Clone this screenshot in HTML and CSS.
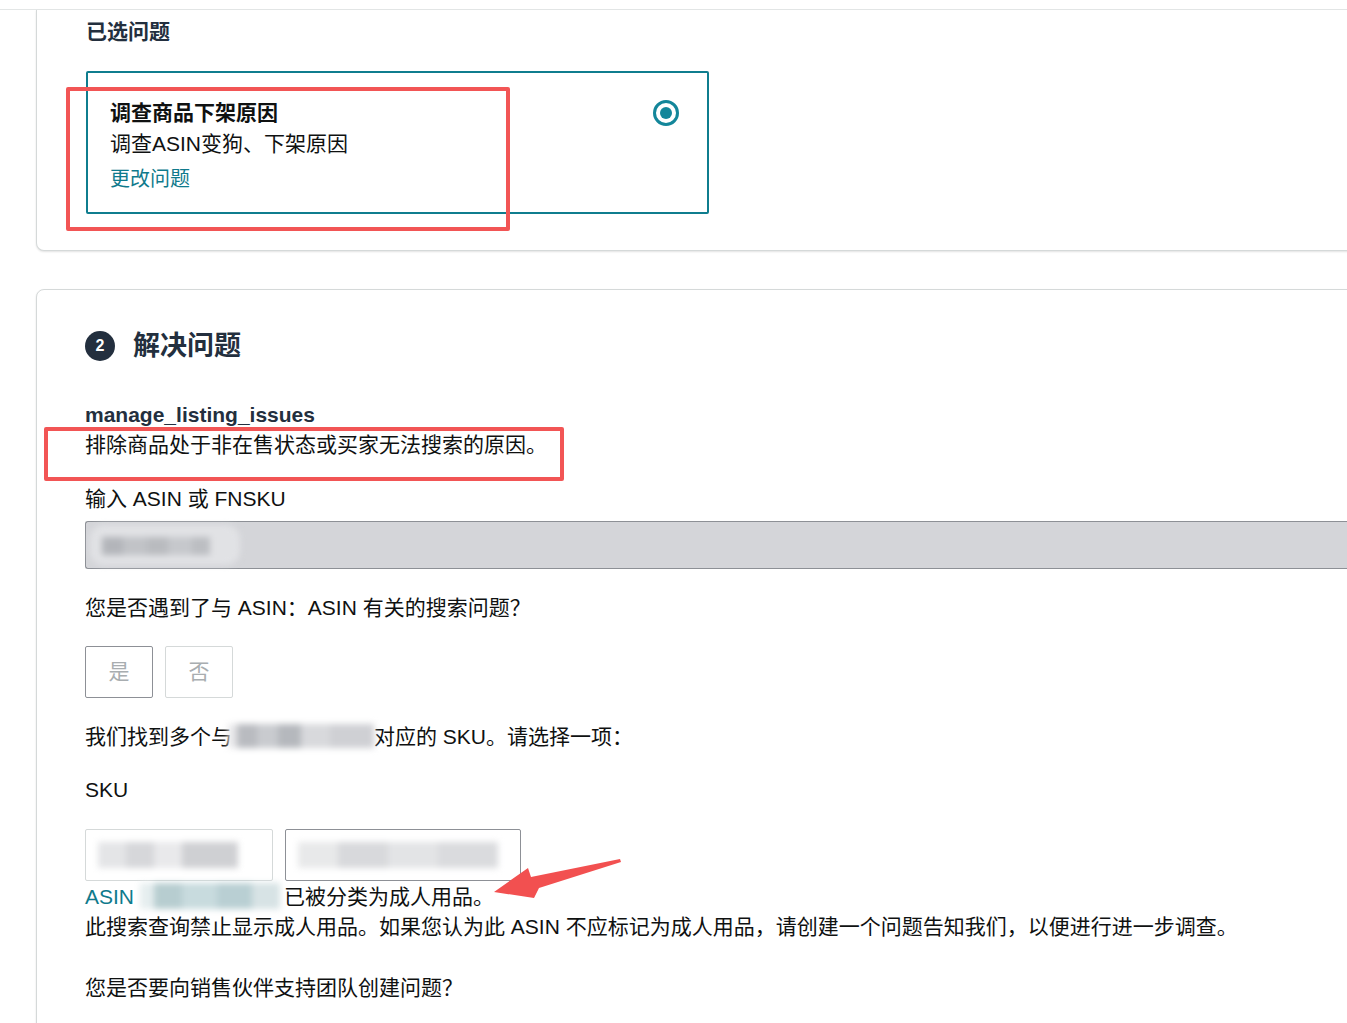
FILE: index.html
```html
<!DOCTYPE html>
<html lang="zh-CN">
<head>
<meta charset="utf-8">
<title>解决问题</title>
<link rel="stylesheet" href="styles.css">
</head>
<body>
<div class="topline"></div>
<div class="card card-top">
  <h3 class="section-title">已选问题</h3>
  <div class="selected-box">
    <div class="sel-text">
      <div class="sel-title">调查商品下架原因</div>
      <div class="sel-desc">调查ASIN变狗、下架原因</div>
      <a class="link sel-link">更改问题</a>
    </div>
    <span class="radio"><span class="radio-dot"></span></span>
  </div>
  <div class="annot annot-1"></div>
</div>

<div class="card card-main">
  <div class="step-head">
    <span class="step-num">2</span>
    <h2 class="step-title">解决问题</h2>
  </div>
  <div class="intro">
    <div class="intro-key">manage_listing_issues</div>
    <div class="line">排除商品处于非在售状态或买家无法搜索的原因。</div>
    <div class="annot annot-2"></div>
  </div>

  <div class="line label">输入 ASIN 或 FNSKU</div>
  <div class="input"><span class="blur blur-input"></span></div>

  <div class="line q1">您是否遇到了与 ASIN：ASIN 有关的搜索问题？</div>
  <div class="btn-row">
    <span class="choice choice-yes">是</span>
    <span class="choice">否</span>
  </div>

  <div class="line q2">我们找到多个与<span class="blur blur-inline"></span>对应的 SKU。请选择一项：</div>
  <div class="line sku-label">SKU</div>
  <div class="sku-row">
    <span class="sku-box"><span class="blur blur-sku1"></span></span>
    <span class="sku-box sku-box-dark"><span class="blur blur-sku2"></span></span>
  </div>
  <div class="adult">
    <div class="line"><span class="teal">ASIN</span><span class="blur blur-asin"></span>已被分类为成人用品。</div>
    <div class="line">此搜索查询禁止显示成人用品。如果您认为此 ASIN 不应标记为成人用品，请创建一个问题告知我们，以便进行进一步调查。</div>
    <svg class="arrow" width="140" height="50" viewBox="0 0 140 50">
      <path d="M1 40 L35 16 L38 25 L127 7 L128 10 L46 36 L41 46 Z" fill="#f25050"/>
    </svg>
  </div>
  <div class="line q3">您是否要向销售伙伴支持团队创建问题？</div>
</div>
</body>
</html>
```

FILE: styles.css
```css
html, body {
  margin: 0;
  padding: 0;
  background: #ffffff;
  overflow: hidden;
}
body {
  font-family: "Liberation Sans", "Noto Sans CJK SC", sans-serif;
  color: #0f1111;
  font-size: 21px;
  line-height: 30px;
  width: 1347px;
  height: 1023px;
}
.topline {
  height: 9px;
  border-bottom: 1px solid #e3e6e6;
}
.card {
  position: relative;
  margin-left: 36px;
  width: 1400px;
  background: #fff;
  border: 1px solid #d5d9d9;
  box-sizing: border-box;
  box-shadow: 0 1px 2px rgba(15, 17, 17, 0.12);
}
.card-top {
  border-top: none;
  border-radius: 0 0 0 8px;
  height: 241px;
  padding: 7px 0 0 49px;
}
.section-title {
  margin: 0;
  font-size: 21px;
  line-height: 30px;
  font-weight: bold;
  color: #232f3e;
}
.selected-box {
  margin-top: 24px;
  width: 623px;
  height: 143px;
  box-sizing: border-box;
  border: 2px solid #0f7d8e;
  border-radius: 2px;
  display: flex;
  justify-content: space-between;
  padding: 25px 28px 0 22px;
}
.sel-title {
  font-weight: bold;
  line-height: 30px;
  color: #0f1111;
}
.sel-desc {
  margin-top: 1px;
  line-height: 30px;
}
.sel-link {
  display: block;
  margin-top: 5px;
  font-size: 20px;
  line-height: 30px;
}
.link, .teal {
  color: #0f7a8c;
}
.radio {
  margin-top: 2px;
  width: 26px;
  height: 26px;
  box-sizing: border-box;
  border: 3px solid #13869a;
  border-radius: 50%;
  display: flex;
  align-items: center;
  justify-content: center;
}
.radio-dot {
  width: 12px;
  height: 12px;
  border-radius: 50%;
  background: #13869a;
}
.annot {
  position: absolute;
  border: 4px solid #f25555;
  border-radius: 2px;
  pointer-events: none;
}
.annot-1 {
  left: 29px;
  top: 77px;
  width: 436px;
  height: 136px;
}
.card-main {
  margin-top: 38px;
  border-radius: 8px 0 0 0;
  height: 800px;
  padding: 40px 0 0 48px;
}
.step-head {
  display: flex;
  align-items: center;
  gap: 18px;
  height: 32px;
}
.step-num {
  width: 30px;
  height: 30px;
  border-radius: 50%;
  background: #232f3e;
  color: #fff;
  font-size: 16px;
  font-weight: bold;
  line-height: 30px;
  text-align: center;
}
.step-title {
  margin: 0;
  font-size: 27px;
  line-height: 32px;
  font-weight: bold;
  color: #232f3e;
}
.intro {
  position: relative;
  margin-top: 38px;
}
.intro-key {
  font-weight: bold;
  line-height: 30px;
  color: #232f3e;
}
.annot-2 {
  left: -41px;
  top: 27px;
  width: 512px;
  height: 46px;
}
.line {
  line-height: 30px;
}
.label {
  margin-top: 24px;
}
.input {
  margin-top: 7px;
  height: 48px;
  width: 1300px;
  box-sizing: border-box;
  background: #d4d5d9;
  border: 1px solid #8d9096;
  border-right: none;
  border-radius: 3px 0 0 3px;
  display: flex;
  align-items: center;
  padding-left: 4px;
}
.blur {
  display: inline-block;
  filter: blur(3px);
  vertical-align: middle;
}
.blur-input {
  width: 150px;
  height: 40px;
  border-radius: 14px;
  background:
    linear-gradient(90deg, transparent 0 8%, #b3b5ba 8% 22%, #c1c3c7 22% 38%, #b9bbbf 38% 52%, #c6c8cc 52% 68%, #bcbec2 68% 80%, transparent 80% 100%) center 12px / 100% 18px no-repeat,
    #e1e2e5;
}
.q1 {
  margin-top: 24px;
}
.btn-row {
  margin-top: 23px;
  display: flex;
  gap: 12px;
}
.choice {
  width: 68px;
  height: 52px;
  box-sizing: border-box;
  border: 1px solid #d5d9d9;
  border-radius: 2px;
  display: flex;
  align-items: center;
  justify-content: center;
  color: #a8adb0;
}
.choice-yes {
  border-color: #8d9096;
}
.q2 {
  margin-top: 24px;
}
.blur-inline {
  width: 146px;
  height: 24px;
  margin: -4px 0 0 -4px;
  background: linear-gradient(90deg, #e8e8ea 0 6%, #b9bbc0 6% 20%, #c9cbcf 20% 34%, #b5b8bd 34% 50%, #d8d9dc 50% 70%, #cfd0d4 70% 100%);
}
.sku-label {
  margin-top: 23px;
}
.sku-row {
  margin-top: 24px;
  display: flex;
  gap: 12px;
}
.sku-box {
  height: 52px;
  width: 188px;
  box-sizing: border-box;
  border: 1px solid #d5d9d9;
  border-radius: 2px;
  display: flex;
  align-items: center;
  padding-left: 12px;
  overflow: hidden;
}
.sku-box-dark {
  width: 236px;
  border-color: #8d9096;
}
.blur-sku1 {
  width: 140px;
  height: 26px;
  background: linear-gradient(90deg, #e4e5e7 0 20%, #d6d7da 20% 40%, #e9e9eb 40% 60%, #cfd0d3 60% 100%);
}
.blur-sku2 {
  width: 200px;
  height: 26px;
  background: linear-gradient(90deg, #e8e9ea 0 20%, #d8d9dc 20% 45%, #e3e4e6 45% 70%, #dadbde 70% 100%);
}
.adult {
  position: relative;
  margin-top: 1px;
}
.blur-asin {
  width: 140px;
  height: 26px;
  margin: -4px 4px 0 6px;
  background: linear-gradient(90deg, #e6eeef 0 10%, #b7cdd0 10% 30%, #c8dbde 30% 55%, #b9cfd3 55% 80%, #d7e3e5 80% 100%);
}
.arrow {
  position: absolute;
  left: 408px;
  top: -30px;
}
.q3 {
  margin-top: 31px;
}
```
